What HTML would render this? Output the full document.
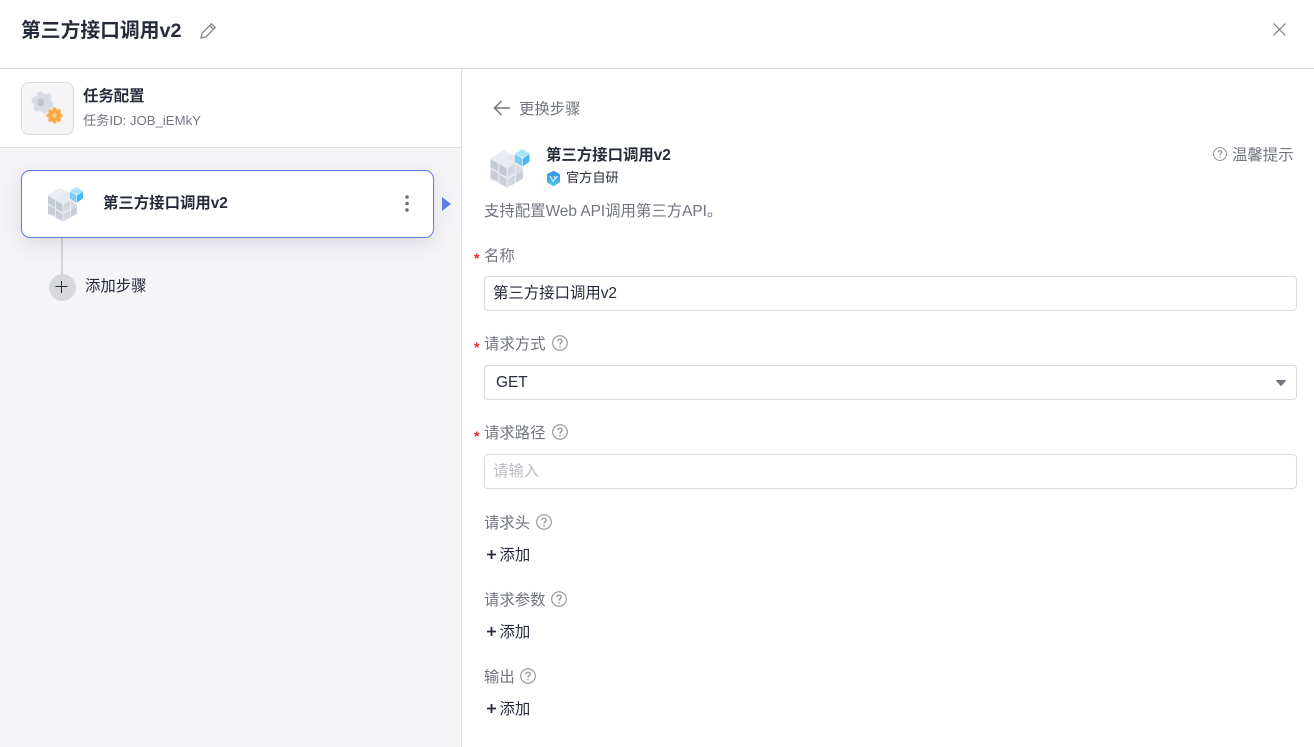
<!DOCTYPE html>
<html lang="zh-CN">
<head>
<meta charset="utf-8">
<style>
html,body{margin:0;padding:0;width:1314px;height:747px;overflow:hidden;background:#fff}
body{font-family:"Liberation Sans","Noto Sans CJK SC",sans-serif;position:relative;font-size:15.4px;color:#252b3a}
.a{position:absolute;white-space:nowrap}
.lb{font-size:15.4px;line-height:20px;color:#71757f}
.star{position:absolute;color:#f5222d;font-size:14px;line-height:20px;font-weight:700}
.inp{position:absolute;left:484px;width:811px;height:33px;border:1px solid #d9d9d9;border-radius:4px;background:#fff;line-height:33px;font-size:15.4px}
svg{position:absolute;overflow:visible}
</style>
</head>
<body>
<svg width="0" height="0" style="left:0;top:0">
<defs>
<filter id="soft" x="-10%" y="-10%" width="120%" height="120%"><feGaussianBlur stdDeviation="0.35"/></filter>
<filter id="soft2" x="-10%" y="-10%" width="120%" height="120%"><feGaussianBlur stdDeviation="0.5"/></filter>
<linearGradient id="bd" x1="0" y1="0" x2="0" y2="1"><stop offset="0" stop-color="#2f8fe6"/><stop offset="1" stop-color="#4fc3e8"/></linearGradient>
<symbol id="cube" viewBox="0 0 36 35">
<g filter="url(#soft)">
<path d="M12 1 26 8 29 18V27L15 35 0 27V8Z" fill="#e8ebf0"/>
<path d="M12 1 19 5 7 12 0 8Z" fill="#e9eef5"/>
<path d="M19.500 5 26.500 9 22 12 14.500 8Z" fill="#e2e6ed"/>
<path d="M0 9 7 13V20.500L0 16.500Z" fill="#c6cbd6"/>
<path d="M15 8.500 22 12.500 15 16.500 8 12.500Z" fill="#e6ebf2"/>
<path d="M8 13.500 14.500 17.500V25L8 21.500Z" fill="#c3c8d4"/>
<path d="M15.500 17.500 22 13.500V21.500L15.500 25Z" fill="#d3d7e0"/>
<path d="M23 14 29 18V26L23 22Z" fill="#d6dae2"/>
<path d="M0 18 7 22V29L0 26.500Z" fill="#c8cdd8"/>
<path d="M8 23 14.500 27V34L8 30.500Z" fill="#c9ced9"/>
<path d="M15.500 27 22 23.500V30.500L15.500 34Z" fill="#d3d7e0"/>
<path d="M23 23.500 29 20V26.500L23 30Z" fill="#c9cdd7"/>
<path d="M28.500 0 35 4 29 8 22 4Z" fill="#a9e4fb"/>
<path d="M22 4.500 28.500 8.500V15.500L22 11.500Z" fill="#76cdf8"/>
<path d="M35 4.500V11.500L29 15.500V8.500Z" fill="#45b6f3"/>
</g>
</symbol>
<symbol id="q" viewBox="0 0 16 16">
<g fill="none" stroke="#85878f"><circle cx="8" cy="8" r="7.3"/><path d="M5.800 6.200C5.800 3.500 10.200 3.600 10.200 6.100 10.200 7.600 8 7.700 8 9.600" stroke-width="1.2"/></g><circle cx="8" cy="11.800" r=".8" fill="#85878f"/>
</symbol>
</defs>
</svg>

<!-- Header -->
<div class="a" style="left:21px;top:16px;font-size:19.8px;line-height:30px;font-weight:700;color:#252b3a">第三方接口调用v2</div>
<svg style="left:200px;top:22px" width="17" height="17" viewBox="0 0 17 17" fill="none" stroke="#85878f" stroke-width="1.3"><path d="M1 16 2 11.300 11.500 1.800 15.200 5.500 5.700 15Z"/><path d="M9.800 3.500 13.500 7.200"/></svg>
<svg style="left:1273px;top:23px" width="13" height="13" viewBox="0 0 13 13" fill="none" stroke="#71757f" stroke-width="1.1"><path d="M.5 .5 12.500 12.500M12.500 .5 .5 12.500"/></svg>
<div class="a" style="left:0;top:68px;width:1314px;height:1px;background:#d9d9d9"></div>

<!-- Left panel -->
<div class="a" style="left:0;top:148px;width:461px;height:599px;background:#f5f5f8"></div>
<div class="a" style="left:0;top:147px;width:461px;height:1px;background:#dedede"></div>
<div class="a" style="left:461px;top:69px;width:1px;height:678px;background:#dedede"></div>

<div class="a" style="left:21px;top:82px;width:51px;height:51px;border:1px solid #dcdcdf;border-radius:8px;background:#f5f5f8"></div>
<svg style="left:30px;top:90px" width="33" height="36" viewBox="0 0 33 36">
<g filter="url(#soft2)">
<g fill="#d5dae3">
<circle cx="12.500" cy="12.500" r="9"/>
<rect x="9.500" y="1.500" width="6" height="4" rx="1.500" transform="rotate(-15 12.500 12.500)"/>
<rect x="9.500" y="1.500" width="6" height="4" rx="1.500" transform="rotate(45 12.500 12.500)"/>
<rect x="9.500" y="1.500" width="6" height="4" rx="1.500" transform="rotate(105 12.500 12.500)"/>
<rect x="9.500" y="1.500" width="6" height="4" rx="1.500" transform="rotate(165 12.500 12.500)"/>
<rect x="9.500" y="1.500" width="6" height="4" rx="1.500" transform="rotate(225 12.500 12.500)"/>
<rect x="9.500" y="1.500" width="6" height="4" rx="1.500" transform="rotate(285 12.500 12.500)"/>
</g>
<ellipse cx="10.500" cy="12.500" rx="3.200" ry="4" fill="#bfc4cd"/>
<g fill="#f9a63a">
<circle cx="24.500" cy="25.500" r="6"/>
<rect x="22.800" y="17.500" width="3.400" height="3.500" rx="1"/>
<rect x="22.800" y="30" width="3.400" height="3.500" rx="1"/>
<rect x="16.500" y="23.800" width="3.500" height="3.400" rx="1"/>
<rect x="29" y="23.800" width="3.500" height="3.400" rx="1"/>
<rect x="18.300" y="19.300" width="3.400" height="3.400" rx="1"/>
<rect x="27.300" y="19.300" width="3.400" height="3.400" rx="1"/>
<rect x="18.300" y="28.300" width="3.400" height="3.400" rx="1"/>
<rect x="27.300" y="28.300" width="3.400" height="3.400" rx="1"/>
</g>
<circle cx="24.500" cy="25.500" r="2.300" fill="#fcd38c"/>
</g>
</svg>
<div class="a" style="left:83px;top:87px;font-size:15.4px;line-height:20px;font-weight:700;color:#252b3a">任务配置</div>
<div class="a" style="left:83px;top:111px;font-size:13.2px;line-height:20px;color:#71757f">任务ID: JOB_iEMkY</div>

<!-- Step card -->
<div class="a" style="left:61px;top:237px;width:2px;height:38px;background:#d4d4d6"></div>
<div class="a" style="left:21px;top:170px;width:411px;height:66px;border:1px solid #5e7ce0;border-radius:9px;background:#fff;box-shadow:0 6px 20px rgba(60,70,100,.15)"></div>
<svg style="left:48px;top:187px" width="36" height="35"><use href="#cube" width="36" height="35"/></svg>
<div class="a" style="left:103px;top:194px;font-size:15.4px;line-height:20px;font-weight:700;color:#252b3a">第三方接口调用v2</div>
<svg style="left:404px;top:194px" width="6" height="20" viewBox="0 0 6 20" fill="#6b7080"><circle cx="3" cy="3" r="1.800"/><circle cx="3" cy="9.500" r="1.800"/><circle cx="3" cy="16" r="1.800"/></svg>
<svg style="left:442px;top:197px" width="9" height="14" viewBox="0 0 9 14"><path d="M0 0 9 7 0 14Z" fill="#5e7ce0"/></svg>

<div class="a" style="left:49px;top:274px;width:27px;height:27px;border-radius:50%;background:#d7d8da"></div>
<svg style="left:55px;top:280px" width="14" height="14" viewBox="0 0 14 14" stroke="#252b3a" stroke-width="1"><path d="M6.500 1V13M.5 6.500H12.500"/></svg>
<div class="a" style="left:85px;top:277px;font-size:15.4px;line-height:20px;color:#252b3a">添加步骤</div>

<!-- Right panel -->
<svg style="left:493px;top:100px" width="18" height="16" viewBox="0 0 18 16" fill="none" stroke="#71757f" stroke-width="1.5"><path d="M17 8H1.500M8.500 1 1.500 8 8.500 15"/></svg>
<div class="a" style="left:519px;top:100px;font-size:15.4px;line-height:20px;color:#71757f">更换步骤</div>

<svg style="left:489px;top:149px" width="43" height="39" viewBox="0 0 43 39"><use href="#cube" width="43" height="39"/></svg>
<div class="a" style="left:546px;top:146px;font-size:15.4px;line-height:20px;font-weight:700;color:#252b3a">第三方接口调用v2</div>
<svg style="left:546px;top:171px" width="15" height="15" viewBox="0 0 15 15"><path d="M7.500 .3 13.500 3.600V11L7.500 14.700 1.500 11V3.600Z" fill="url(#bd)" stroke="url(#bd)" stroke-linejoin="round"/><path d="M4 5 7.200 10.500 9 7.500M8 5 9.500 7.500 11.500 5" fill="none" stroke="#d7f3fb" stroke-width="1.200"/></svg>
<div class="a" style="left:566px;top:169px;font-size:13.2px;line-height:18px;color:#252b3a">官方自研</div>
<svg style="left:1213px;top:147px" width="14" height="14"><use href="#q" width="14" height="14"/></svg>
<div class="a" style="left:1232px;top:146px;font-size:15.4px;line-height:20px;color:#71757f">温馨提示</div>
<div class="a" style="left:484px;top:202px;font-size:15.4px;line-height:20px;color:#71757f">支持配置Web API调用第三方API。</div>

<!-- 名称 -->
<div class="star" style="left:474px;top:248px">*</div>
<div class="a lb" style="left:484px;top:247px">名称</div>
<div class="inp" style="top:276px;color:#252b3a"><span style="margin-left:8px">第三方接口调用v2</span></div>

<!-- 请求方式 -->
<div class="star" style="left:474px;top:337px">*</div>
<div class="a lb" style="left:484px;top:335px">请求方式</div>
<svg style="left:552px;top:335px" width="16" height="16"><use href="#q" width="16" height="16"/></svg>
<div class="inp" style="top:365px;height:33px;line-height:33px;color:#252b3a"><span style="margin-left:11px">GET</span></div>
<svg style="left:1275.500px;top:380px" width="10" height="6" viewBox="0 0 10 6"><path d="M.5 .5H9.500L5 5.500Z" fill="#71757f" stroke="#71757f" stroke-linejoin="round"/></svg>

<!-- 请求路径 -->
<div class="star" style="left:474px;top:426px">*</div>
<div class="a lb" style="left:484px;top:424px">请求路径</div>
<svg style="left:552px;top:424px" width="16" height="16"><use href="#q" width="16" height="16"/></svg>
<div class="inp" style="top:454px;color:#bbbdc2"><span style="margin-left:8px">请输入</span></div>

<!-- 请求头 -->
<div class="a lb" style="left:484px;top:514px">请求头</div>
<svg style="left:536px;top:514px" width="16" height="16"><use href="#q" width="16" height="16"/></svg>
<svg style="left:487px;top:550px" width="9" height="9" viewBox="0 0 9 9" stroke="#252b3a" stroke-width="1.800"><path d="M4.500 0V9M0 4.500H9"/></svg>
<div class="a" style="left:499.500px;top:546px;line-height:20px;color:#252b3a">添加</div>

<!-- 请求参数 -->
<div class="a lb" style="left:484px;top:591px">请求参数</div>
<svg style="left:551px;top:591px" width="16" height="16"><use href="#q" width="16" height="16"/></svg>
<svg style="left:487px;top:627px" width="9" height="9" viewBox="0 0 9 9" stroke="#252b3a" stroke-width="1.800"><path d="M4.500 0V9M0 4.500H9"/></svg>
<div class="a" style="left:499.500px;top:623px;line-height:20px;color:#252b3a">添加</div>

<!-- 输出 -->
<div class="a lb" style="left:484px;top:668px">输出</div>
<svg style="left:520px;top:668px" width="16" height="16"><use href="#q" width="16" height="16"/></svg>
<svg style="left:487px;top:704px" width="9" height="9" viewBox="0 0 9 9" stroke="#252b3a" stroke-width="1.800"><path d="M4.500 0V9M0 4.500H9"/></svg>
<div class="a" style="left:499.500px;top:700px;line-height:20px;color:#252b3a">添加</div>
</body>
</html>
